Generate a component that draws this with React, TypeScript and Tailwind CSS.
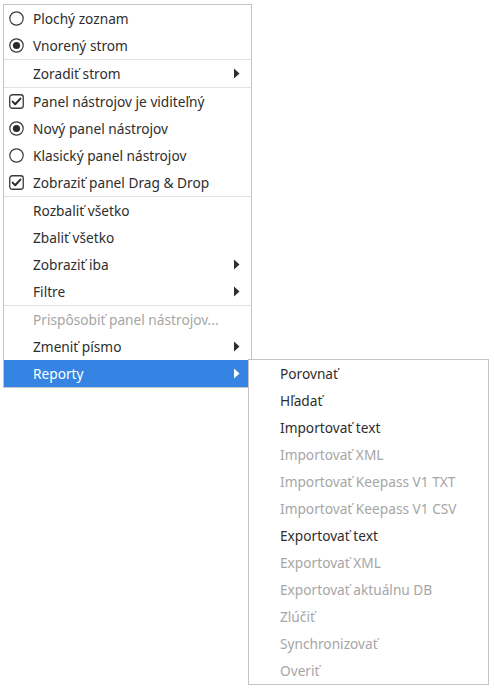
import React from "react";

type Item =
  | { kind: "sep" }
  | {
      kind?: "item";
      label: string;
      mark?: "radio-on" | "radio-off" | "check";
      sub?: boolean;
      disabled?: boolean;
      active?: boolean;
    };

const mainItems: Item[] = [
  { label: "Plochý zoznam", mark: "radio-off" },
  { label: "Vnorený strom", mark: "radio-on" },
  { kind: "sep" },
  { label: "Zoradiť strom", sub: true },
  { kind: "sep" },
  { label: "Panel nástrojov je viditeľný", mark: "check" },
  { label: "Nový panel nástrojov", mark: "radio-on" },
  { label: "Klasický panel nástrojov", mark: "radio-off" },
  { label: "Zobraziť panel Drag & Drop", mark: "check" },
  { kind: "sep" },
  { label: "Rozbaliť všetko" },
  { label: "Zbaliť všetko" },
  { label: "Zobraziť iba", sub: true },
  { label: "Filtre", sub: true },
  { kind: "sep" },
  { label: "Prispôsobiť panel nástrojov...", disabled: true },
  { label: "Zmeniť písmo", sub: true },
  { label: "Reporty", sub: true, active: true },
];

const subItems = [
  { label: "Porovnať" },
  { label: "Hľadať" },
  { label: "Importovať text" },
  { label: "Importovať XML", disabled: true },
  { label: "Importovať Keepass V1 TXT", disabled: true },
  { label: "Importovať Keepass V1 CSV", disabled: true },
  { label: "Exportovať text" },
  { label: "Exportovať XML", disabled: true },
  { label: "Exportovať aktuálnu DB", disabled: true },
  { label: "Zlúčiť", disabled: true },
  { label: "Synchronizovať", disabled: true },
  { label: "Overiť", disabled: true },
];

function Mark({ type }: { type: "radio-on" | "radio-off" | "check" }) {
  if (type === "check") {
    return (
      <svg width="15" height="15" viewBox="0 0 15 15">
        <rect x="0.75" y="0.75" width="13.5" height="13.5" rx="2.5" fill="#fff" stroke="#3a3a3a" strokeWidth="1.3" />
        <path d="M3.6 7.6l2.6 2.6 5.2-5.6" fill="none" stroke="#2a2a2a" strokeWidth="2" strokeLinecap="round" strokeLinejoin="round" />
      </svg>
    );
  }
  return (
    <svg width="15" height="15" viewBox="0 0 15 15">
      <circle cx="7.5" cy="7.5" r="6.7" fill="#fff" stroke="#3a3a3a" strokeWidth="1.2" />
      {type === "radio-on" && <circle cx="7.5" cy="7.5" r="3.6" fill="#2a2a2a" />}
    </svg>
  );
}

function Arrow({ white }: { white?: boolean }) {
  return (
    <svg width="7" height="11" viewBox="0 0 7 11" className="mr-[11px]">
      <path d="M1 0.5L6.5 5.5L1 10.5Z" fill={white ? "#ffffff" : "#2e2e2e"} />
    </svg>
  );
}

export default function App() {
  return (
    <div
      className="relative w-[494px] h-[690px] bg-white text-[13.7px]"
      style={{ fontFamily: '"Noto Sans", "Open Sans", sans-serif' }}
    >
      <div className="absolute left-[3px] top-[4px] w-[249px] border border-[#c4c4c4] bg-white">
        {mainItems.map((it, i) =>
          it.kind === "sep" ? (
            <div key={i} className="h-px bg-[#e2e2e2]" />
          ) : (
            <div
              key={i}
              className={`flex h-[27px] items-center pl-[5px] ${
                it.active ? "bg-[#3584e4] text-white" : it.disabled ? "text-[#a6a6a6]" : "text-[#2e2e2e]"
              }`}
            >
              <div className="flex w-[24px] shrink-0 items-center">
                {it.mark && <Mark type={it.mark} />}
              </div>
              <span className="flex-1 whitespace-nowrap leading-none">{it.label}</span>
              {it.sub && <Arrow white={it.active} />}
            </div>
          )
        )}
      </div>

      <div className="absolute left-[248px] top-[359px] w-[241px] border border-[#c4c4c4] bg-white">
        {subItems.map((it, i) => (
          <div
            key={i}
            className={`flex h-[27px] items-center pl-[31px] whitespace-nowrap leading-none ${
              it.disabled ? "text-[#a6a6a6]" : "text-[#2e2e2e]"
            }`}
          >
            {it.label}
          </div>
        ))}
      </div>
    </div>
  );
}
